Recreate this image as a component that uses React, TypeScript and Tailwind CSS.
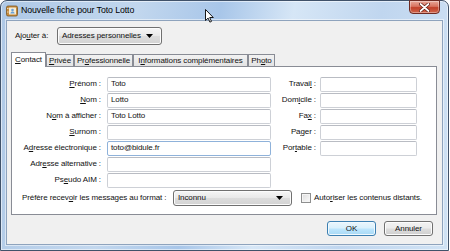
import React from 'react';

interface Field {
  label: string;
  key: number;
  value?: string;
  focus?: boolean;
}

const leftFields: Field[] = [
  { label: 'Prénom', key: 0, value: 'Toto' },
  { label: 'Nom', key: 0, value: 'Lotto' },
  { label: 'Nom à afficher', key: 1, value: 'Toto Lotto' },
  { label: 'Surnom', key: 0 },
  { label: 'Adresse électronique', key: 1, value: 'toto@bidule.fr', focus: true },
  { label: 'Adresse alternative', key: 3 },
  { label: 'Pseudo AIM', key: 2 },
];

const rightFields: Field[] = [
  { label: 'Travail', key: 6 },
  { label: 'Domicile', key: 3 },
  { label: 'Fax', key: 2 },
  { label: 'Pager', key: 2 },
  { label: 'Portable', key: 3 },
];

const tabs = [
  { label: 'Contact', key: 0, w: 'w-[35px]', active: true },
  { label: 'Privée', key: 0, w: 'w-[28px]' },
  { label: 'Professionnelle', key: 2, w: 'w-[59px]' },
  { label: 'Informations complémentaires', key: 1, w: 'w-[115px]' },
  { label: 'Photo', key: 2, w: 'w-[27px]' },
];

// underline the access key letter
const Acc = ({ t, k }: { t: string; k: number }) => (
  <>
    {t.slice(0, k)}
    <span className="underline underline-offset-[1px]">{t[k]}</span>
    {t.slice(k + 1)}
  </>
);

const Arrow = () => (
  <svg width="7" height="4" viewBox="0 0 7 4" className="shrink-0">
    <path d="M0 0h7L3.5 4z" fill="#000" />
  </svg>
);

const Combo = ({ text, w }: { text: string; w: string }) => (
  <div
    className={`${w} h-full flex items-center justify-between pl-[4px] pr-[8px] rounded-[3px] border border-[#707070] bg-[linear-gradient(#f6f6f6_0%,#e9e9e9_48%,#dcdcdc_52%,#d3d3d3_100%)] shadow-[inset_0_0_0_1px_#fcfcfc]`}
  >
    <span className="whitespace-nowrap">{text}</span>
    <Arrow />
  </div>
);

const TextBox = ({ value, focus, w }: { value?: string; focus?: boolean; w: string }) => (
  <div
    className={`${w} h-[15px] flex items-center pl-[3px] bg-white rounded-[2px] border ${
      focus ? 'border-[#8fb2da]' : 'border-[#cdd0d6] border-t-[#b9bcc3]'
    }`}
  >
    {value}
  </div>
);

const App: React.FC = () => {
  return (
    <div className="w-[450px] h-[251px] bg-white relative overflow-hidden font-['Liberation_Sans',Arial,sans-serif] text-[8px] tracking-[-0.1px] text-[#111]">
      <div className="w-[449px] h-[251px] rounded-t-[7px] border border-[#40526a] bg-[linear-gradient(100deg,#aec8e6_0%,#c2d7ee_28%,#a8c6e9_45%,#d6e6f6_60%,#c0d6ef_78%,#d0e2f4_100%)] shadow-[inset_0_0_0_1px_rgba(255,255,255,0.55)] flex flex-col px-[5px] pb-[5px]">
        {/* title bar */}
        <div className="h-[19px] flex items-center">
          <svg width="12" height="12" viewBox="0 0 12 12">
            <rect x="0.5" y="1" width="11" height="10" rx="1.5" fill="#c58b3c" stroke="#7d5520" strokeWidth="0.8" />
            <rect x="3" y="2.5" width="7" height="7" rx="0.5" fill="#f6ecd6" />
            <circle cx="6.5" cy="5" r="1.3" fill="#6aa2d8" />
            <path d="M4.3 8.6c.4-1.5 1.3-2 2.2-2s1.8.5 2.2 2z" fill="#6aa2d8" />
            <rect x="1.2" y="3" width="1.2" height="1" fill="#f6ecd6" />
            <rect x="1.2" y="6.5" width="1.2" height="1" fill="#f6ecd6" />
          </svg>
          <span className="ml-[3px] text-[8.8px] tracking-[-0.1px] text-black">Nouvelle fiche pour Toto Lotto</span>
          <div className="ml-auto mr-[3px] self-start -mt-px w-[31px] h-[14px] rounded-b-[4px] border border-[#6e2a22] bg-[linear-gradient(#e9a99a_0%,#d8735f_45%,#c2412a_55%,#d0654b_100%)] shadow-[inset_0_0_0_1px_rgba(255,255,255,0.35)] flex items-center justify-center">
            <svg width="11" height="9" viewBox="0 0 11 9">
              <path d="M1.5 1l8 7M9.5 1l-8 7" stroke="#5a1a12" strokeWidth="3.2" strokeLinecap="round" />
              <path d="M1.5 1l8 7M9.5 1l-8 7" stroke="#fff" strokeWidth="1.7" strokeLinecap="round" />
            </svg>
          </div>
        </div>

        {/* client area */}
        <div className="flex-1 flex flex-col bg-[#f0f0f0] border border-[#8ea3bd] shadow-[0_0_0_1px_rgba(255,255,255,0.5)]">
          <div className="mt-[6px] ml-[8px] h-[18px] flex items-center">
            <span className="w-[42px]">
              <Acc t="Ajouter à:" k={3} />
            </span>
            <Combo text="Adresses personnelles" w="w-[105px]" />
          </div>

          <div className="mt-[7px] ml-[4px] w-[426px]">
            <div className="h-[14px] flex items-end">
              {tabs.map(tab => (
                <div
                  key={tab.label}
                  className={`${tab.w} flex items-center justify-center border border-b-0 border-[#898c95] whitespace-nowrap ${
                    tab.active
                      ? 'h-[15px] -mb-px bg-white relative z-10'
                      : 'h-[12px] bg-[linear-gradient(#f2f2f2,#e3e3e3)]'
                  }`}
                >
                  <Acc t={tab.label} k={tab.key} />
                </div>
              ))}
            </div>
            <div className="h-[149px] border border-[#898c95] bg-white pt-[9px]">
              <div className="flex">
                <div className="flex flex-col">
                  {leftFields.map(f => (
                    <div key={f.label} className="h-[16px] flex items-center gap-[6px]">
                      <span className="w-[89px] text-right">
                        <Acc t={f.label} k={f.key} /> :
                      </span>
                      <TextBox value={f.value} focus={f.focus} w="w-[164px]" />
                    </div>
                  ))}
                </div>
                <div className="flex flex-col">
                  {rightFields.map(f => (
                    <div key={f.label} className="h-[16px] flex items-center gap-[4px]">
                      <span className="w-[45px] text-right">
                        <Acc t={f.label} k={f.key} /> :
                      </span>
                      <TextBox w="w-[97px]" />
                    </div>
                  ))}
                </div>
              </div>

              <div className="mt-[2px] pl-[10px] h-[16px] flex items-center">
                <span className="w-[151px] whitespace-nowrap">
                  <Acc t="Préfère recevoir les messages au format" k={13} /> :
                </span>
                <Combo text="Inconnu" w="w-[119px]" />
                <div className="ml-[9px] w-[10px] h-[10px] border border-[#8e8f8f] bg-[linear-gradient(135deg,#dcdcdc,#fbfbfb)] shadow-[inset_0_0_0_1px_#f4f4f4]" />
                <span className="ml-[3px] whitespace-nowrap">
                  <Acc t="Autoriser les contenus distants." k={4} />
                </span>
              </div>
            </div>
          </div>

          <div className="mt-[6px] pr-[9px] flex justify-end gap-[8px]">
            <div className="w-[49px] h-[15px] flex items-center justify-center rounded-[3px] border border-[#3c7fb1] bg-[linear-gradient(#eaf6fd_0%,#d9f0fc_48%,#bee6fd_52%,#a7d9f5_100%)] shadow-[inset_0_0_0_1px_#f0f9fe]">
              OK
            </div>
            <div className="w-[49px] h-[15px] flex items-center justify-center rounded-[3px] border border-[#707070] bg-[linear-gradient(#f2f2f2_0%,#ebebeb_48%,#dddddd_52%,#cfcfcf_100%)] shadow-[inset_0_0_0_1px_#fcfcfc]">
              Annuler
            </div>
          </div>
        </div>
      </div>

      {/* mouse pointer */}
      <svg className="absolute left-[205px] top-[9px]" width="9" height="14" viewBox="0 0 9 14">
        <path d="M0.5 0.5v11l2.6-2.4 1.8 4 1.6-.7-1.8-3.9h3.6z" fill="#fff" stroke="#000" strokeWidth="0.9" strokeLinejoin="round" />
      </svg>
    </div>
  );
};

export default App;
